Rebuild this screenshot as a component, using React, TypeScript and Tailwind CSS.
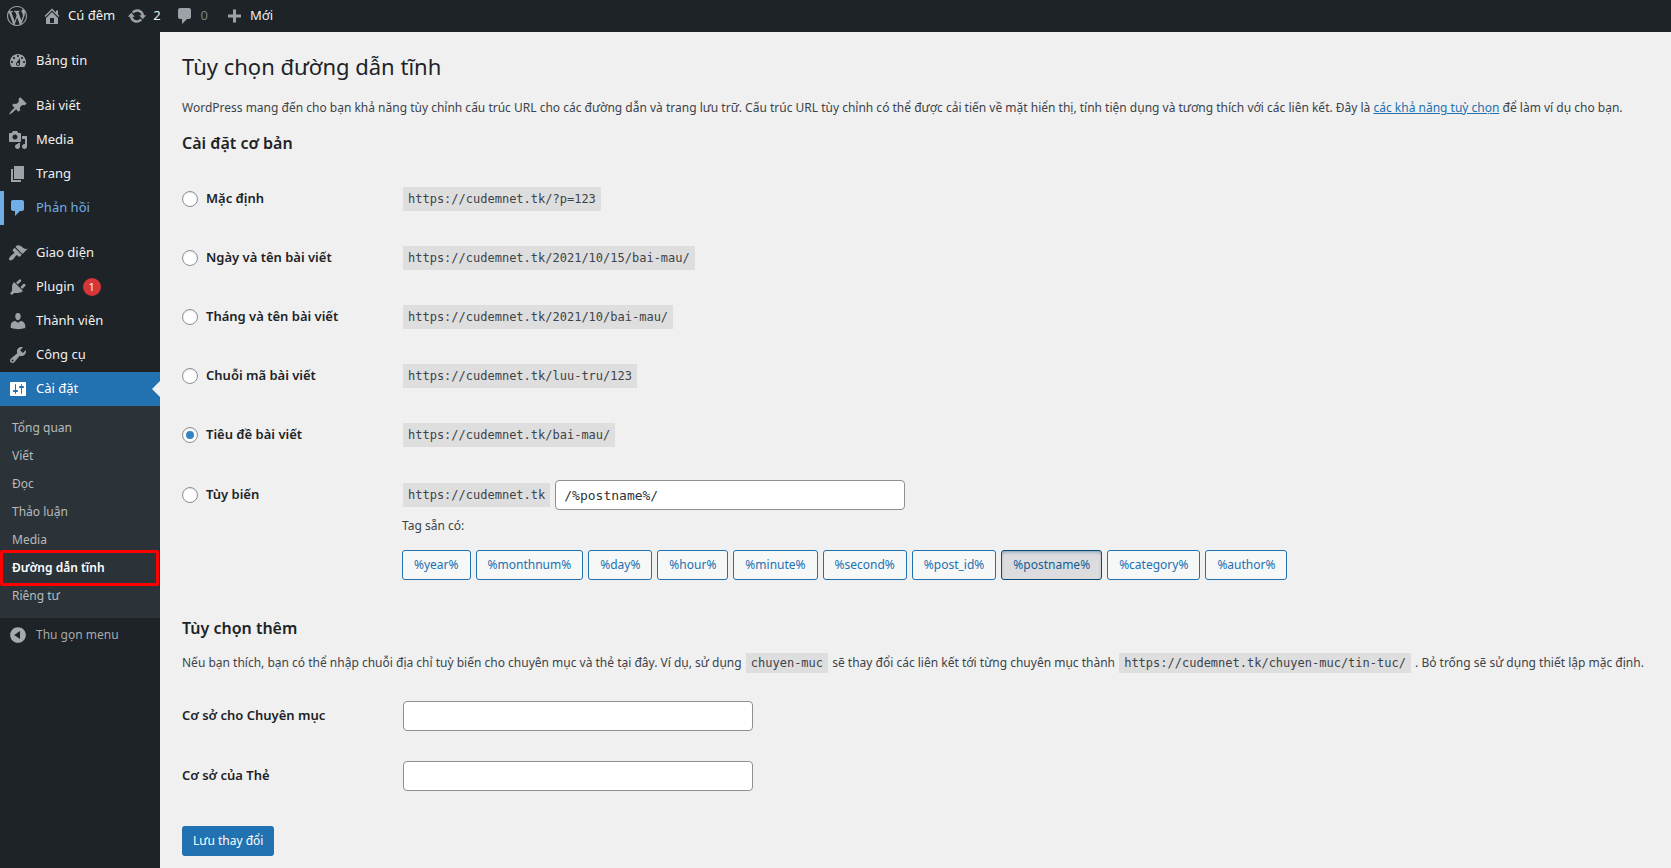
import { useState } from 'react';
import type { ReactNode } from 'react';
import clsx from 'clsx';

// 20x20 admin icon glyphs
const ICONS = {
  wordpress:
    'M20 10c0-5.51-4.49-10-10-10C4.48 0 0 4.49 0 10c0 5.52 4.48 10 10 10 5.51 0 10-4.48 10-10zM7.78 15.37L4.37 6.22c.55-.02 1.17-.08 1.17-.08.5-.06.44-1.13-.06-1.11 0 0-1.45.11-2.37.11-.18 0-.37 0-.58-.01C4.12 2.69 6.87 1.11 10 1.11c2.33 0 4.45.87 6.05 2.34-.68-.11-1.65.39-1.65 1.58 0 .74.45 1.36.9 2.1.35.61.55 1.36.55 2.46 0 1.49-1.4 5-1.4 5l-3.03-8.37c.54-.02.82-.17.82-.17.5-.05.44-1.25-.06-1.22 0 0-1.44.12-2.38.12-.87 0-2.33-.12-2.33-.12-.5-.03-.56 1.2-.06 1.22l.92.08 1.26 3.41zM17.41 10c.24-.64.74-1.87.43-4.25.7 1.29 1.05 2.71 1.05 4.25 0 3.29-1.73 6.24-4.4 7.78.97-2.59 1.94-5.2 2.92-7.78zM6.1 18.09C3.12 16.65 1.11 13.53 1.11 10c0-1.3.23-2.48.72-3.59C3.25 10.3 4.67 14.2 6.1 18.09zm4.03-6.63l2.58 6.98c-.86.29-1.76.45-2.71.45-.79 0-1.57-.11-2.29-.33.81-2.38 1.62-4.74 2.42-7.1z',
  home: 'M16 8.5l1.53 1.53-1.06 1.06L10 4.6l-6.47 6.49-1.06-1.06L10 2.5l4 4v-2h2v4zm-6-2.46l6 5.99V18H4v-5.97zM12 17v-5H8v5h4z',
  update:
    'M10.2 3.28c3.53 0 6.43 2.61 6.92 6h2.08l-3.5 4-3.5-4h2.32c-.45-1.97-2.21-3.45-4.32-3.45-1.45 0-2.73.71-3.54 1.78L4.95 5.66C6.23 4.2 8.11 3.28 10.2 3.28zm-.4 13.44c-3.52 0-6.43-2.61-6.92-6H.8l3.5-4c1.17 1.33 2.33 2.67 3.5 4H5.48c.45 1.97 2.21 3.45 4.32 3.45 1.45 0 2.73-.71 3.54-1.78l1.71 1.95c-1.28 1.46-3.15 2.38-5.25 2.38z',
  comments:
    'M5 2h9c1.1 0 2 .9 2 2v7c0 1.1-.9 2-2 2h-2l-5 5v-5H5c-1.1 0-2-.9-2-2V4c0-1.1.9-2 2-2z',
  plus: 'M17 8.5v3h-5v5H9v-5H4v-3h5v-5h3v5h5z',
  dashboard:
    'M3.76 16h12.48c1.1-1.37 1.76-3.11 1.76-5 0-4.42-3.58-8-8-8s-8 3.58-8 8c0 1.89.66 3.63 1.76 5zM10 4c.55 0 1 .45 1 1s-.45 1-1 1-1-.45-1-1 .45-1 1-1zM6 6c.55 0 1 .45 1 1s-.45 1-1 1-1-.45-1-1 .45-1 1-1zm8 0c.55 0 1 .45 1 1s-.45 1-1 1-1-.45-1-1 .45-1 1-1zm-5.37 5.55L12 7v6c0 1.1-.9 2-2 2s-2-.9-2-2c0-.57.24-1.08.63-1.45zM4 10c.55 0 1 .45 1 1s-.45 1-1 1-1-.45-1-1 .45-1 1-1zm12 0c.55 0 1 .45 1 1s-.45 1-1 1-1-.45-1-1 .45-1 1-1zm-5 3c0-.55-.45-1-1-1s-1 .45-1 1 .45 1 1 1 1-.45 1-1z',
  post: 'M10.44 3.02l1.82-1.82 6.36 6.35-1.83 1.82c-1.05-.68-2.48-.57-3.41.36l-.75.75c-.92.93-1.04 2.35-.35 3.41l-1.83 1.82-2.41-2.41-2.8 2.79c-.42.42-3.38 2.71-3.8 2.29s1.86-3.39 2.28-3.81l2.79-2.79L4.1 9.36l1.83-1.82c1.05.69 2.48.57 3.4-.36l.75-.75c.93-.92 1.05-2.35.36-3.41z',
  media:
    'M13 11V4c0-.55-.45-1-1-1h-1.67L9 1H5L3.67 3H2c-.55 0-1 .45-1 1v7c0 .55.45 1 1 1h10c.55 0 1-.45 1-1zM7 4.5c1.38 0 2.5 1.12 2.5 2.5S8.38 9.5 7 9.5 4.5 8.38 4.5 7 5.62 4.5 7 4.5zM14 6h5v10.5c0 1.38-1.12 2.5-2.5 2.5S14 17.88 14 16.5s1.12-2.5 2.5-2.5c.17 0 .34.02.5.05V9h-3V6zm-4 8.05V13h2v3.5c0 1.38-1.12 2.5-2.5 2.5S7 17.88 7 16.5 8.12 14 9.5 14c.17 0 .34.02.5.05z',
  page: 'M6 15V2h10v13H6zm-1 1h8v2H3V5h2v11z',
  appearance:
    'M14.48 11.06L7.41 3.99l1.5-1.5c.5-.56 2.3-.47 3.51.32 1.21.8 1.43 1.28 2.91 2.1 1.18.64 2.45 1.26 4.45.85zm-.71.71L6.7 4.7 4.93 6.47c-.39.39-.39 1.02 0 1.41l1.06 1.06c.39.39.39 1.03 0 1.42-.6.6-1.43 1.11-2.21 1.69-.35.26-.7.53-1.01.84C1.43 14.23.4 16.08 1.4 17.07c.99 1 2.84-.03 4.18-1.36.31-.31.58-.66.85-1.02.57-.78 1.08-1.61 1.69-2.21.39-.39 1.02-.39 1.41 0l1.06 1.06c.39.39 1.02.39 1.41 0z',
  plugins:
    'M13.11 4.36L9.87 7.6 8 5.73l3.24-3.24c.35-.34 1.05-.2 1.56.32.52.51.66 1.21.31 1.55zm-8 1.77l.91-1.12 9.01 9.01-1.19.84c-.71.71-2.63 1.16-3.82 1.16H6.14L4.9 17.26c-.59.59-1.54.59-2.12 0-.59-.58-.59-1.53 0-2.12l1.24-1.24v-3.88c0-1.13.4-3.19 1.09-3.89zm7.26 3.97l3.24-3.24c.34-.35 1.04-.21 1.55.31.52.51.66 1.21.31 1.55l-3.24 3.25z',
  users:
    'M10 9.25c-2.27 0-2.73-3.44-2.73-3.44C7 4.02 7.82 2 9.97 2c2.16 0 2.98 2.02 2.71 3.81 0 0-.41 3.44-2.68 3.44zm0 2.57L12.72 10c2.39 0 4.52 2.33 4.52 4.53v2.49s-3.65 1.13-7.24 1.13c-3.65 0-7.24-1.13-7.24-1.13v-2.49c0-2.25 1.94-4.48 4.47-4.48z',
  tools:
    'M16.68 9.77c-1.34 1.34-3.3 1.67-4.95.99l-5.41 6.52c-.99.99-2.59.99-3.58 0s-.99-2.59 0-3.57l6.52-5.42c-.68-1.65-.35-3.61.99-4.95 1.28-1.28 3.12-1.62 4.72-1.06l-2.89 2.89 2.82 2.82 2.86-2.87c.53 1.58.18 3.39-1.08 4.65zM3.81 16.21c.4.39 1.04.39 1.43 0 .4-.4.4-1.04 0-1.43-.39-.4-1.03-.4-1.43 0-.39.39-.39 1.03 0 1.43z',
  settings:
    'M18 16V4c0-.55-.45-1-1-1H3c-.55 0-1 .45-1 1v12c0 .55.45 1 1 1h14c.55 0 1-.45 1-1zM8 11h1c.55 0 1 .45 1 1s-.45 1-1 1H8v1.5c0 .28-.22.5-.5.5s-.5-.22-.5-.5V13H6c-.55 0-1-.45-1-1s.45-1 1-1h1V5.5c0-.28.22-.5.5-.5s.5.22.5.5V11zm5-2h-1c-.55 0-1-.45-1-1s.45-1 1-1h1V5.5c0-.28.22-.5.5-.5s.5.22.5.5V7h1c.55 0 1 .45 1 1s-.45 1-1 1h-1v5.5c0 .28-.22.5-.5.5s-.5-.22-.5-.5V9z',
  collapse:
    'M10 2.16c4.33 0 7.84 3.51 7.84 7.84s-3.51 7.84-7.84 7.84S2.16 14.33 2.16 10 5.71 2.16 10 2.16zM12 13.88V6.12L6.18 9.97z',
};

type IconName = keyof typeof ICONS;

function Icon({ name, className = 'w-5 h-5' }: { name: IconName; className?: string }) {
  return (
    <svg viewBox="0 0 20 20" fill="currentColor" fillRule="evenodd" aria-hidden="true" className={clsx('shrink-0', className)}>
      <path d={ICONS[name]} />
    </svg>
  );
}

interface MenuItem {
  label: string;
  icon: IconName;
  badge?: number;
  hovered?: boolean;
}

const MENU_GROUPS: MenuItem[][] = [
  [{ label: 'Bảng tin', icon: 'dashboard' }],
  [
    { label: 'Bài viết', icon: 'post' },
    { label: 'Media', icon: 'media' },
    { label: 'Trang', icon: 'page' },
    { label: 'Phản hồi', icon: 'comments', hovered: true },
  ],
  [
    { label: 'Giao diện', icon: 'appearance' },
    { label: 'Plugin', icon: 'plugins', badge: 1 },
    { label: 'Thành viên', icon: 'users' },
    { label: 'Công cụ', icon: 'tools' },
  ],
];

const SUBMENU = ['Tổng quan', 'Viết', 'Đọc', 'Thảo luận', 'Media', 'Đường dẫn tĩnh', 'Riêng tư'];
const CURRENT = 'Đường dẫn tĩnh';

const STRUCTURES = [
  { id: 'plain', label: 'Mặc định', url: 'https://cudemnet.tk/?p=123' },
  { id: 'day', label: 'Ngày và tên bài viết', url: 'https://cudemnet.tk/2021/10/15/bai-mau/' },
  { id: 'month', label: 'Tháng và tên bài viết', url: 'https://cudemnet.tk/2021/10/bai-mau/' },
  { id: 'numeric', label: 'Chuỗi mã bài viết', url: 'https://cudemnet.tk/luu-tru/123' },
  { id: 'postname', label: 'Tiêu đề bài viết', url: 'https://cudemnet.tk/bai-mau/' },
];

const TAGS = ['year', 'monthnum', 'day', 'hour', 'minute', 'second', 'post_id', 'postname', 'category', 'author'];

function AdminBar() {
  return (
    <header className="flex h-8 items-center bg-[#1d2327] px-[7px] text-[13px] text-[#f0f0f1]">
      <a href="#about" aria-label="WordPress" className="mr-[15px] text-[#9ca2a7]">
        <Icon name="wordpress" />
      </a>
      <a href="#site" className="mr-3 flex items-center gap-1.5">
        <Icon name="home" className="w-5 h-5 text-[#9ca2a7]" />
        Cú đêm
      </a>
      <a href="#updates" className="mr-3.5 flex items-center gap-1.5">
        <Icon name="update" className="w-5 h-5 text-[#9ca2a7]" />2
      </a>
      <a href="#comments" className="mr-4 flex items-center gap-1.5 text-[#7d8285]">
        <Icon name="comments" className="w-5 h-5 text-[#9ca2a7]" />0
      </a>
      <a href="#new" className="flex items-center gap-1.5">
        <Icon name="plus" className="w-5 h-5 text-[#9ca2a7]" />
        Mới
      </a>
    </header>
  );
}

function SideMenu() {
  return (
    <nav className="w-40 shrink-0 bg-[#1d2327] pt-3 text-[13px] text-[#f0f0f1]">
      {MENU_GROUPS.map((group, i) => (
        <ul key={i} className="mb-[11px] last-of-type:mb-0">
          {group.map((item) => (
            <li key={item.label}>
              <a
                href="#menu"
                className={clsx(
                  'flex h-[34px] items-center gap-2 pl-2',
                  item.hovered && 'text-[#72aee6] shadow-[inset_4px_0_0_0_#72aee6]'
                )}
              >
                <Icon name={item.icon} className={clsx('w-5 h-5', !item.hovered && 'text-[#9ca2a7]')} />
                {item.label}
                {item.badge && (
                  <span className="flex h-[18px] w-[18px] items-center justify-center rounded-full bg-[#d63638] text-[11px] text-white">
                    {item.badge}
                  </span>
                )}
              </a>
            </li>
          ))}
        </ul>
      ))}

      <a href="#settings" className="relative flex h-[34px] items-center gap-2 bg-[#2271b1] pl-2 text-white">
        <Icon name="settings" />
        Cài đặt
        <span className="absolute right-0 top-[9px] border-8 border-transparent border-r-[#f0f0f0]" />
      </a>
      <div className="bg-[#2c3338] py-2">
        {SUBMENU.map((label) => (
          <a
            key={label}
            href="#submenu"
            className={clsx(
              'relative flex h-7 items-center px-3 text-[12px]',
              label === CURRENT ? 'font-semibold text-white' : 'text-[#b8babb]'
            )}
          >
            {label}
            {label === CURRENT && <span className="absolute -inset-y-1 left-0 right-px rounded-xs border-3 border-[#ff0000]" />}
          </a>
        ))}
      </div>
      <button type="button" className="flex h-[34px] items-center gap-2 pl-2 text-[12px] text-[#a7aaad]">
        <Icon name="collapse" />
        Thu gọn menu
      </button>
    </nav>
  );
}

function Code({ children }: { children: ReactNode }) {
  return (
    <code className="mx-px bg-[#dedede] px-[5px] py-[3px] font-['DejaVu_Sans_Mono',monospace] text-[12px]">{children}</code>
  );
}

function StructureRadio({ id, label, selected, onSelect }: { id: string; label: string; selected: string; onSelect: (id: string) => void }) {
  return (
    <label className="flex w-[220px] shrink-0 items-center gap-2 text-[13px] font-semibold text-[#1d2327]">
      <input
        type="radio"
        name="structure"
        value={id}
        checked={selected === id}
        onChange={() => onSelect(id)}
        className="flex h-4 w-4 appearance-none items-center justify-center rounded-full border border-[#8c8f94] bg-white shadow-[inset_0_1px_2px_rgba(0,0,0,0.1)] before:h-2 before:w-2 before:rounded-full checked:before:bg-[#3582c4]"
      />
      {label}
    </label>
  );
}

const inputClass = 'h-[30px] w-[350px] rounded-sm border border-[#8c8f94] bg-white px-2 text-[#2c3338]';

export default function App() {
  const [selected, setSelected] = useState('postname');
  const [custom, setCustom] = useState('/%postname%/');

  const toggleTag = (tag: string) => {
    setSelected('custom');
    setCustom((prev) => (prev.includes(tag) ? prev.replace(`${tag}/`, '') : `${prev}${tag}/`));
  };

  return (
    <div className="flex min-h-screen flex-col bg-[#f0f0f0] font-['Noto_Sans',sans-serif] text-[12px] text-[#3c434a]">
      <AdminBar />
      <div className="flex flex-1">
        <SideMenu />
        <main className="min-w-0 flex-1 pl-[22px] pr-1 pt-[18px]">
          <h1 className="text-[22px] leading-8 text-[#1d2327]">Tùy chọn đường dẫn tĩnh</h1>
          <p className="mt-4 leading-5">
            WordPress mang đến cho bạn khả năng tùy chỉnh cấu trúc URL cho các đường dẫn và trang lưu trữ. Cấu trúc URL tùy
            chỉnh có thể được cải tiến về mặt hiển thị, tính tiện dụng và tương thích với các liên kết. Đây là{' '}
            <a href="#custom" className="text-[#2271b1] underline">
              các khả năng tuỳ chọn
            </a>{' '}
            để làm ví dụ cho bạn.
          </p>

          <form onSubmit={(e) => e.preventDefault()}>
            <h2 className="mt-[13px] text-[16px] font-semibold leading-6 text-[#1d2327]">Cài đặt cơ bản</h2>
            <div className="mt-3.5">
              {STRUCTURES.map((s) => (
                <div key={s.id} className="flex h-[59px] items-center">
                  <StructureRadio id={s.id} label={s.label} selected={selected} onSelect={setSelected} />
                  <Code>{s.url}</Code>
                </div>
              ))}
              <div className="flex items-start pt-4">
                <div className="flex h-[30px] items-center">
                  <StructureRadio id="custom" label="Tùy biến" selected={selected} onSelect={setSelected} />
                </div>
                <div>
                  <div className="flex items-center gap-1">
                    <Code>https://cudemnet.tk</Code>
                    <input
                      type="text"
                      aria-label="Cấu trúc tùy biến"
                      value={custom}
                      onChange={(e) => setCustom(e.target.value)}
                      className={clsx(inputClass, "font-['DejaVu_Sans_Mono',monospace] text-[13px]")}
                    />
                  </div>
                  <p className="mt-1.5 leading-5">Tag sẵn có:</p>
                  <div className="mt-3.5 flex flex-wrap gap-[5px]">
                    {TAGS.map((name) => {
                      const tag = `%${name}%`;
                      const active = custom.includes(tag);
                      return (
                        <button
                          key={name}
                          type="button"
                          aria-pressed={active}
                          onClick={() => toggleTag(tag)}
                          className={clsx(
                            'h-[30px] rounded-[3px] border px-[11px]',
                            active
                              ? 'border-[#0a4b78] bg-[#dcdcde] text-[#135e96] shadow-[inset_0_2px_5px_-3px_#0a4b78]'
                              : 'border-[#2271b1] bg-[#f6f7f7] text-[#2271b1]'
                          )}
                        >
                          {tag}
                        </button>
                      );
                    })}
                  </div>
                </div>
              </div>
            </div>

            <h2 className="mt-9 text-[16px] font-semibold leading-6 text-[#1d2327]">Tùy chọn thêm</h2>
            <p className="mt-[13px] leading-5">
              Nếu bạn thích, bạn có thể nhập chuỗi địa chỉ tuỳ biến cho chuyên mục và thẻ tại đây. Ví dụ, sử dụng{' '}
              <Code>chuyen-muc</Code> sẽ thay đổi các liên kết tới từng chuyên mục thành{' '}
              <Code>https://cudemnet.tk/chuyen-muc/tin-tuc/</Code> . Bỏ trống sẽ sử dụng thiết lập mặc định.
            </p>
            <div className="mt-7 flex flex-col gap-[30px]">
              <div className="flex items-center">
                <label htmlFor="category_base" className="w-[221px] shrink-0 text-[13px] font-semibold text-[#1d2327]">
                  Cơ sở cho Chuyên mục
                </label>
                <input id="category_base" type="text" className={inputClass} />
              </div>
              <div className="flex items-center">
                <label htmlFor="tag_base" className="w-[221px] shrink-0 text-[13px] font-semibold text-[#1d2327]">
                  Cơ sở của Thẻ
                </label>
                <input id="tag_base" type="text" className={inputClass} />
              </div>
            </div>
            <button type="submit" className="mt-[35px] h-[30px] rounded-[3px] bg-[#2271b1] px-[11px] text-white">
              Lưu thay đổi
            </button>
          </form>
        </main>
      </div>
    </div>
  );
}
